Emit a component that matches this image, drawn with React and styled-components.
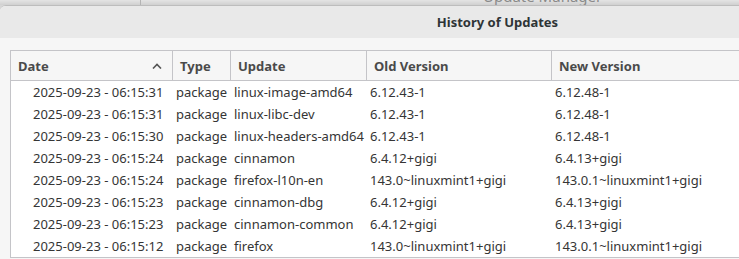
import styled, { createGlobalStyle } from "styled-components";

const GlobalStyle = createGlobalStyle`
  html, body {
    margin: 0;
    padding: 0;
    background: #d9d9d9;
    overflow: hidden;
  }
  body {
    font-family: "Noto Sans", "DejaVu Sans", sans-serif;
  }
`;

const columns = [
  { key: "date", label: "Date", width: "161px", indent: 22, sorted: true },
  { key: "type", label: "Type", width: "58px", indent: 4 },
  { key: "update", label: "Update", width: "136px", indent: 4 },
  { key: "oldVer", label: "Old Version", width: "185px", indent: 4 },
  { key: "newVer", label: "New Version", width: "1fr", indent: 4 },
];

const rows = [
  ["2025-09-23 - 06:15:31", "package", "linux-image-amd64", "6.12.43-1", "6.12.48-1"],
  ["2025-09-23 - 06:15:31", "package", "linux-libc-dev", "6.12.43-1", "6.12.48-1"],
  ["2025-09-23 - 06:15:30", "package", "linux-headers-amd64", "6.12.43-1", "6.12.48-1"],
  ["2025-09-23 - 06:15:24", "package", "cinnamon", "6.4.12+gigi", "6.4.13+gigi"],
  ["2025-09-23 - 06:15:24", "package", "firefox-l10n-en", "143.0~linuxmint1+gigi", "143.0.1~linuxmint1+gigi"],
  ["2025-09-23 - 06:15:23", "package", "cinnamon-dbg", "6.4.12+gigi", "6.4.13+gigi"],
  ["2025-09-23 - 06:15:23", "package", "cinnamon-common", "6.4.12+gigi", "6.4.13+gigi"],
  ["2025-09-23 - 06:15:12", "package", "firefox", "143.0~linuxmint1+gigi", "143.0.1~linuxmint1+gigi"],
];

const gridCols = columns.map((c) => c.width).join(" ");

const SortArrow = () => (
  <svg width="10" height="6" viewBox="0 0 10 6">
    <polyline points="1,5.5 5,1.5 9,5.5" fill="none" stroke="#555" strokeWidth="1.6" />
  </svg>
);

const App = () => (
  <Screen>
    <GlobalStyle />
    <BackWindow>
      <BackDivider />
      <BackTitle>Update Manager</BackTitle>
    </BackWindow>
    <Dialog>
      <TitleBar>
        <Title>History of Updates</Title>
      </TitleBar>
      <Body>
        <Table>
          <HeaderRow>
            {columns.map((c, i) => (
              <HeaderCell key={c.key} $first={i === 0}>
                <span>{c.label}</span>
                {c.sorted && <SortArrow />}
              </HeaderCell>
            ))}
          </HeaderRow>
          {rows.map((r, i) => (
            <Row key={i}>
              {r.map((v, j) => (
                <Cell key={j} $indent={columns[j].indent}>
                  {v}
                </Cell>
              ))}
            </Row>
          ))}
        </Table>
      </Body>
    </Dialog>
  </Screen>
);

export default App;

const Screen = styled.div`
  width: 739px;
  height: 259px;
  overflow: hidden;
  background: #d6d6d6;
`;

const BackWindow = styled.div`
  height: 5px;
  display: flex;
  overflow: hidden;
  background: linear-gradient(#e4e4e4, #d0d0d0);
`;

const BackDivider = styled.div`
  width: 140px;
  flex-shrink: 0;
  border-right: 1px solid #b4b4b4;
`;

const BackTitle = styled.div`
  margin-left: 342px;
  margin-top: -12px;
  font-size: 15px;
  line-height: 16px;
  color: #8a8a8a;
  white-space: nowrap;
`;

const Dialog = styled.div`
  width: 995px;
  height: 254px;
  background: #f6f6f6;
  border-top: 1px solid #bdbdbd;
  border-top-left-radius: 6px;
  box-sizing: border-box;
  overflow: hidden;
`;

const TitleBar = styled.div`
  height: 32px;
  display: flex;
  align-items: center;
  justify-content: center;
  background: #e9e9e9;
`;

const Title = styled.div`
  font-size: 13px;
  font-weight: bold;
  color: #2e3436;
`;

const Body = styled.div`
  padding: 12px 0 0 10px;
`;

const Table = styled.div`
  border: 1px solid #c4c4c8;
  border-right: none;
  background: #fff;
`;

const HeaderRow = styled.div`
  display: grid;
  grid-template-columns: ${gridCols};
  height: 29px;
  background: #f6f6f6;
  border-bottom: 1px solid #c4c4c8;
`;

const HeaderCell = styled.div`
  display: flex;
  align-items: center;
  justify-content: space-between;
  padding: 0 10px 0 7px;
  border-left: ${(p) => (p.$first ? "none" : "1px solid #c4c4c8")};
  font-size: 13px;
  font-weight: bold;
  color: #4a4a4a;
  white-space: nowrap;
`;

const Row = styled.div`
  display: grid;
  grid-template-columns: ${gridCols};
  height: 22px;
  align-items: center;
`;

const Cell = styled.div`
  padding-left: ${(p) => p.$indent}px;
  font-size: 13px;
  color: #353535;
  white-space: nowrap;
`;
